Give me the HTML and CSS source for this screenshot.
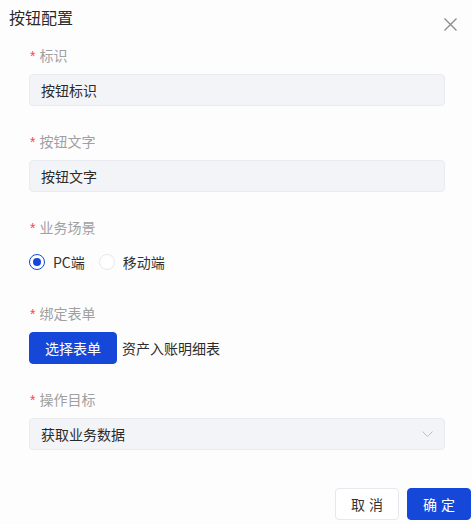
FILE: index.html
```html
<!DOCTYPE html>
<html lang="zh-CN">

<head>
  <meta charset="UTF-8" />
  <title>按钮配置</title>
  <link rel="stylesheet" href="styles.css">
</head>

<body>
  <div class="dialog">
    <div class="dialog-header">
      <div class="dialog-title">按钮配置</div>
      <button class="close-btn" aria-label="关闭">
        <svg width="13" height="13" viewBox="0 0 13 13">
          <path d="M0.5 0.5 L12.5 12.5 M12.5 0.5 L0.5 12.5" stroke="#8a8a8a" stroke-width="1.3" fill="none" />
        </svg>
      </button>
    </div>

    <div class="dialog-body">
      <div class="form-item">
        <div class="form-label"><span class="req">*</span>标识</div>
        <div class="input">按钮标识</div>
      </div>

      <div class="form-item">
        <div class="form-label"><span class="req">*</span>按钮文字</div>
        <div class="input">按钮文字</div>
      </div>

      <div class="form-item">
        <div class="form-label"><span class="req">*</span>业务场景</div>
        <div class="radio-group">
          <label class="radio checked"><span class="radio-dot"></span>PC端</label>
          <label class="radio"><span class="radio-dot"></span>移动端</label>
        </div>
      </div>

      <div class="form-item">
        <div class="form-label"><span class="req">*</span>绑定表单</div>
        <div class="bind-row">
          <button class="btn btn-primary">选择表单</button>
          <span class="bind-name">资产入账明细表</span>
        </div>
      </div>

      <div class="form-item">
        <div class="form-label"><span class="req">*</span>操作目标</div>
        <div class="input select">
          <span>获取业务数据</span>
          <svg width="11" height="6" viewBox="0 0 11 6">
            <path d="M0.5 0.5 L5.5 5.5 L10.5 0.5" stroke="#bbbec6" stroke-width="1" fill="none" />
          </svg>
        </div>
      </div>
    </div>

    <div class="dialog-footer">
      <button class="btn btn-default">取消</button>
      <button class="btn btn-primary">确定</button>
    </div>
  </div>
</body>

</html>
```

FILE: styles.css
```css
* {
  margin: 0;
  padding: 0;
  box-sizing: border-box;
}

html,
body {
  background: #fdfdfe;
  font-family: 'Noto Sans CJK SC', 'Noto Sans', sans-serif;
  color: #333;
  font-size: 14px;
}

.dialog {
  width: 472px;
  height: 524px;
  display: flex;
  flex-direction: column;
}

.dialog-header {
  display: flex;
  justify-content: space-between;
  padding: 5px 15px 0 9px;
  height: 44px;
}

.dialog-title {
  font-size: 16px;
  line-height: 24px;
  color: #2b2b2b;
}

.close-btn {
  background: none;
  border: none;
  margin-top: 13px;
  width: 13px;
  height: 13px;
  cursor: pointer;
  display: flex;
}

.dialog-body {
  padding: 0 27px 0 29px;
  display: flex;
  flex-direction: column;
  gap: 24px;
}

.form-item {
  display: flex;
  flex-direction: column;
  gap: 8px;
}

.form-label {
  height: 22px;
  line-height: 22px;
  color: #a0a0a0;
  font-size: 14px;
}

.req {
  color: #f5474f;
  margin-left: 1px;
  margin-right: 4px;
  font-family: 'Liberation Sans', sans-serif;
}

.input {
  height: 32px;
  background: #f3f4f8;
  border: 1px solid #e9ebf0;
  border-radius: 4px;
  padding: 0 11px;
  line-height: 30px;
  color: #2b2b2b;
}

.select {
  display: flex;
  align-items: center;
  justify-content: space-between;
}

.radio-group {
  height: 32px;
  display: flex;
  align-items: center;
  gap: 14px;
}

.radio {
  display: flex;
  align-items: center;
  gap: 8px;
  color: #333;
}

.radio-dot {
  width: 16px;
  height: 16px;
  border-radius: 50%;
  border: 1px solid #e6e8ee;
  background: #fff;
  position: relative;
}

.radio.checked .radio-dot {
  border-color: #1548d8;
}

.radio.checked .radio-dot::after {
  content: '';
  position: absolute;
  top: 3px;
  left: 3px;
  width: 8px;
  height: 8px;
  border-radius: 50%;
  background: #1548d8;
}

.bind-row {
  display: flex;
  align-items: center;
  gap: 5px;
}

.bind-name {
  color: #2b2b2b;
}

.btn {
  height: 32px;
  width: 88px;
  border-radius: 4px;
  font-family: inherit;
  font-size: 14px;
  cursor: pointer;
}

.btn-primary {
  background: #1548d8;
  border: 1px solid #1548d8;
  color: #fff;
}

.btn-default {
  background: #fff;
  border: 1px solid #e6e8ee;
  color: #333;
}

.dialog-footer {
  margin-top: auto;
  display: flex;
  justify-content: flex-end;
  gap: 8px;
  padding: 0 1px 4px 0;
}

.dialog-footer .btn {
  width: 64px;
  letter-spacing: 4px;
  padding-left: 4px;
}
```
